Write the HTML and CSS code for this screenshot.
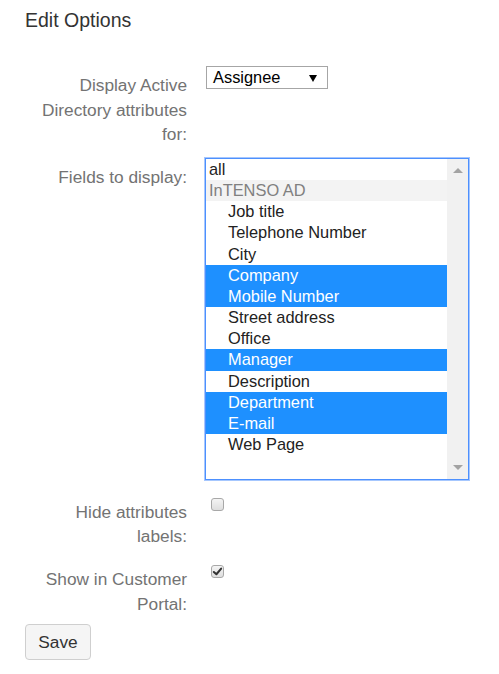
FILE: index.html
```html
<!DOCTYPE html>
<html lang="en">
<head>
    <meta charset="UTF-8">
    <meta name="viewport" content="width=device-width, initial-scale=1.0">
    <title>Edit Options</title>
    <link rel="stylesheet" href="styles.css">
</head>
<body>
    <main class="container">
        <h2 class="page-title">Edit Options</h2>

        <form class="options-form">
            <div class="form-row">
                <label class="form-label">Display Active Directory attributes for:</label>
                <div class="form-control">
                    <div class="dropdown">
                        <span class="dropdown-value">Assignee</span>
                        <span class="dropdown-arrow"></span>
                    </div>
                </div>
            </div>

            <div class="form-row">
                <label class="form-label">Fields to display:</label>
                <div class="form-control">
                    <div class="listbox">
                        <ul class="listbox-items">
                            <li class="list-item">all</li>
                            <li class="list-item group">InTENSO AD</li>
                            <li class="list-item child">Job title</li>
                            <li class="list-item child">Telephone Number</li>
                            <li class="list-item child">City</li>
                            <li class="list-item child selected">Company</li>
                            <li class="list-item child selected">Mobile Number</li>
                            <li class="list-item child">Street address</li>
                            <li class="list-item child">Office</li>
                            <li class="list-item child selected">Manager</li>
                            <li class="list-item child">Description</li>
                            <li class="list-item child selected">Department</li>
                            <li class="list-item child selected">E-mail</li>
                            <li class="list-item child">Web Page</li>
                        </ul>
                        <div class="scrollbar">
                            <span class="scroll-up"></span>
                            <span class="scroll-down"></span>
                        </div>
                    </div>
                </div>
            </div>

            <div class="form-row">
                <label class="form-label">Hide attributes labels:</label>
                <div class="form-control">
                    <span class="checkbox"></span>
                </div>
            </div>

            <div class="form-row">
                <label class="form-label">Show in Customer Portal:</label>
                <div class="form-control">
                    <span class="checkbox checked">
                        <svg viewBox="0 0 12 12" width="11" height="11"><path d="M2 6.5 L4.8 9 L10 2.8" fill="none" stroke="#333" stroke-width="2.2" stroke-linecap="round" stroke-linejoin="round"/></svg>
                    </span>
                </div>
            </div>

            <button type="button" class="btn-save">Save</button>
        </form>
    </main>
</body>
</html>
```

FILE: styles.css
```css
* {
    margin: 0;
    padding: 0;
    box-sizing: border-box;
}

body {
    font-family: 'Liberation Sans', Arial, sans-serif;
    background-color: #fff;
    color: #333;
}

.container {
    padding: 9px 0 0 25px;
}

.page-title {
    font-size: 19.5px;
    font-weight: normal;
    line-height: 23px;
    color: #333;
    margin-bottom: 34px;
}

/* フォーム */
.form-row {
    display: flex;
    margin-bottom: 11px;
}

.form-label {
    width: 162px;
    flex-shrink: 0;
    text-align: right;
    padding-top: 7px;
    font-size: 17.3px;
    line-height: 24.6px;
    color: #737373;
}

.form-control {
    margin-left: 19px;
}

.dropdown {
    width: 122px;
    height: 23px;
    border: 1px solid #a6a6a6;
    display: flex;
    align-items: center;
    justify-content: space-between;
    padding: 0 10px 0 6px;
    font-size: 16.4px;
    color: #000;
}

.dropdown-arrow {
    width: 0;
    height: 0;
    border-left: 4px solid transparent;
    border-right: 4px solid transparent;
    border-top: 7px solid #000;
    margin-top: 1px;
}

.listbox {
    display: flex;
    width: 264px;
    height: 322px;
    border: 1px solid #4d90fe;
    outline: 1px solid rgba(77, 144, 254, 0.5);
    background: white;
    margin-left: -1px;
    margin-bottom: 2px;
}

.listbox-items {
    list-style: none;
    flex: 1;
}

.list-item {
    height: 21.2px;
    line-height: 21.2px;
    font-size: 16.4px;
    color: #222;
    padding-left: 3px;
    white-space: nowrap;
}

.list-item.group {
    background-color: #f3f3f3;
    color: #808080;
}

.list-item.child {
    padding-left: 22px;
}

.list-item.selected {
    background-color: #1e90ff;
    color: white;
}

.scrollbar {
    width: 21px;
    background-color: #f1f1f1;
    display: flex;
    flex-direction: column;
    justify-content: space-between;
    align-items: center;
    padding: 9px 0 9px;
}

.scroll-up,
.scroll-down {
    width: 0;
    height: 0;
    border-left: 5px solid transparent;
    border-right: 5px solid transparent;
}

.scroll-up {
    border-bottom: 5px solid #a3a3a3;
}

.scroll-down {
    border-top: 5px solid #a3a3a3;
}

.checkbox {
    display: flex;
    align-items: center;
    justify-content: center;
    width: 13px;
    height: 13px;
    margin: 5px 0 0 5px;
    border: 1px solid #a8a8a8;
    border-radius: 3px;
    background: linear-gradient(#f4f4f4, #dedede);
}

.checkbox.checked svg {
    display: block;
}

.btn-save {
    margin-top: -3px;
    width: 66px;
    height: 36px;
    border: 1px solid #cfcfcf;
    border-radius: 4px;
    background-color: #f5f5f5;
    font-family: 'Liberation Sans', Arial, sans-serif;
    font-size: 17.3px;
    color: #333;
    cursor: pointer;
}
```
